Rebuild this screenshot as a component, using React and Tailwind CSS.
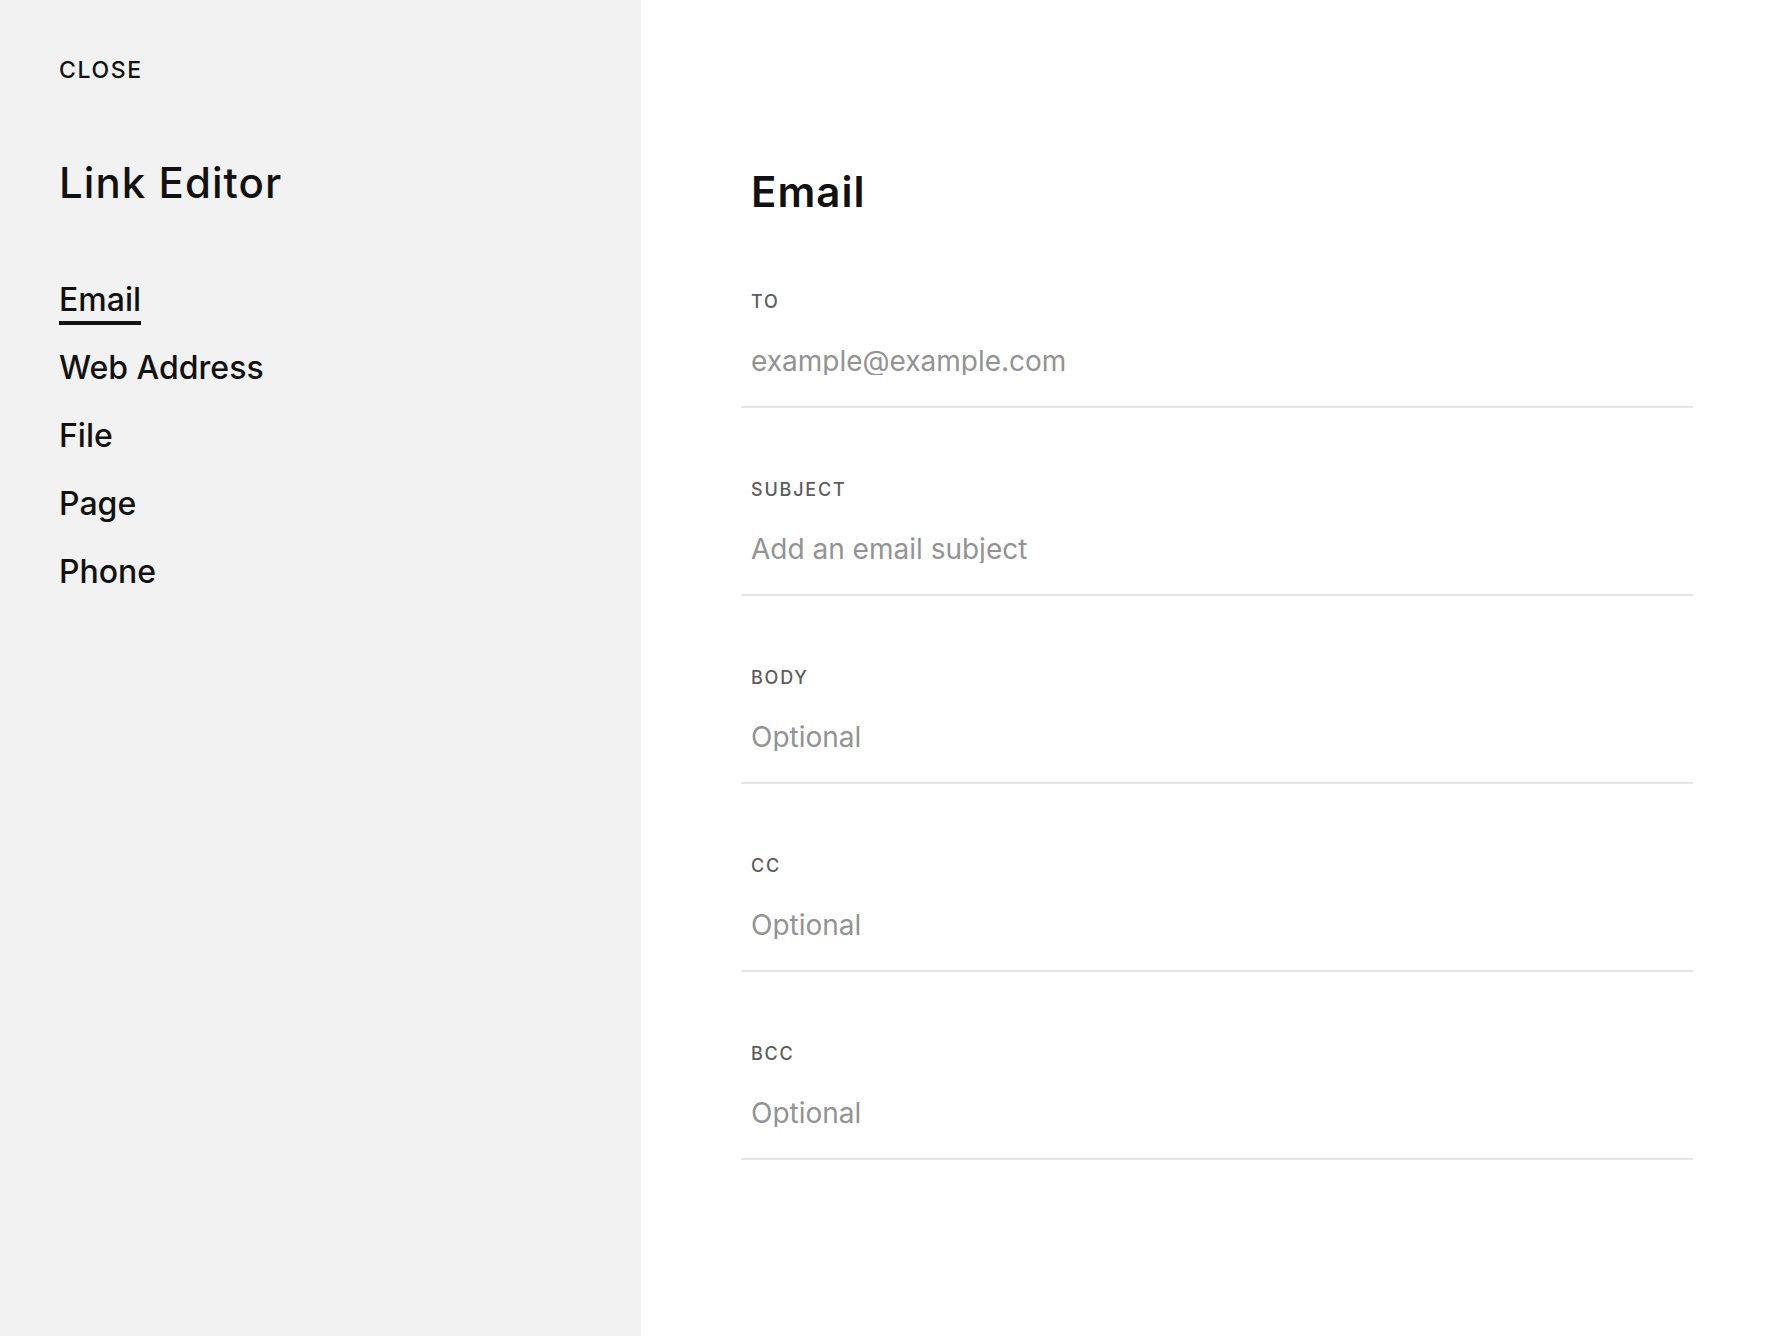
import React from "react";

const fields = [
  { label: "TO", placeholder: "example@example.com" },
  { label: "SUBJECT", placeholder: "Add an email subject" },
  { label: "BODY", placeholder: "Optional" },
  { label: "CC", placeholder: "Optional" },
  { label: "BCC", placeholder: "Optional" },
];

const nav = ["Web Address", "File", "Page", "Phone"];

export default function App() {
  return (
    <div className="flex h-[1336px] w-full font-[Inter,sans-serif] text-[#111111] antialiased">
      <aside className="w-[641px] shrink-0 bg-[#f2f2f2] pl-[59px] pt-[59px]">
        <div className="text-[23px] leading-[23px] font-medium tracking-[0.07em]">CLOSE</div>
        <h1 className="mt-[80px] text-[42px] leading-[42px] font-medium tracking-[0.025em]">Link Editor</h1>
        <nav className="mt-[80px] flex flex-col items-start text-[32px] leading-[32px] font-medium">
          <a className="border-b-4 border-[#111111] pb-[5px]">Email</a>
          <div className="mt-[27px] flex flex-col gap-[36px]">
            {nav.map((n) => (
              <a key={n}>{n}</a>
            ))}
          </div>
        </nav>
      </aside>
      <main className="flex-1 bg-white pl-[100px] pt-[171px]">
        <div className="w-[952px]">
          <h2 className="pl-[10px] text-[42px] leading-[42px] font-semibold tracking-[0.025em]">Email</h2>
          <div className="mt-[80px] flex flex-col gap-[73px]">
            {fields.map((f) => (
              <label key={f.label} className="block border-b-2 border-[#e6e6e6] pb-[31px] pl-[10px]">
                <div className="text-[18px] leading-[18px] font-medium tracking-[0.1em] text-[#5c5c5c]">
                  {f.label}
                </div>
                <input
                  className="mt-[36px] block h-[28px] w-full bg-transparent text-[28px] leading-[28px] outline-none placeholder:text-[#939393]"
                  placeholder={f.placeholder}
                />
              </label>
            ))}
          </div>
        </div>
      </main>
    </div>
  );
}
